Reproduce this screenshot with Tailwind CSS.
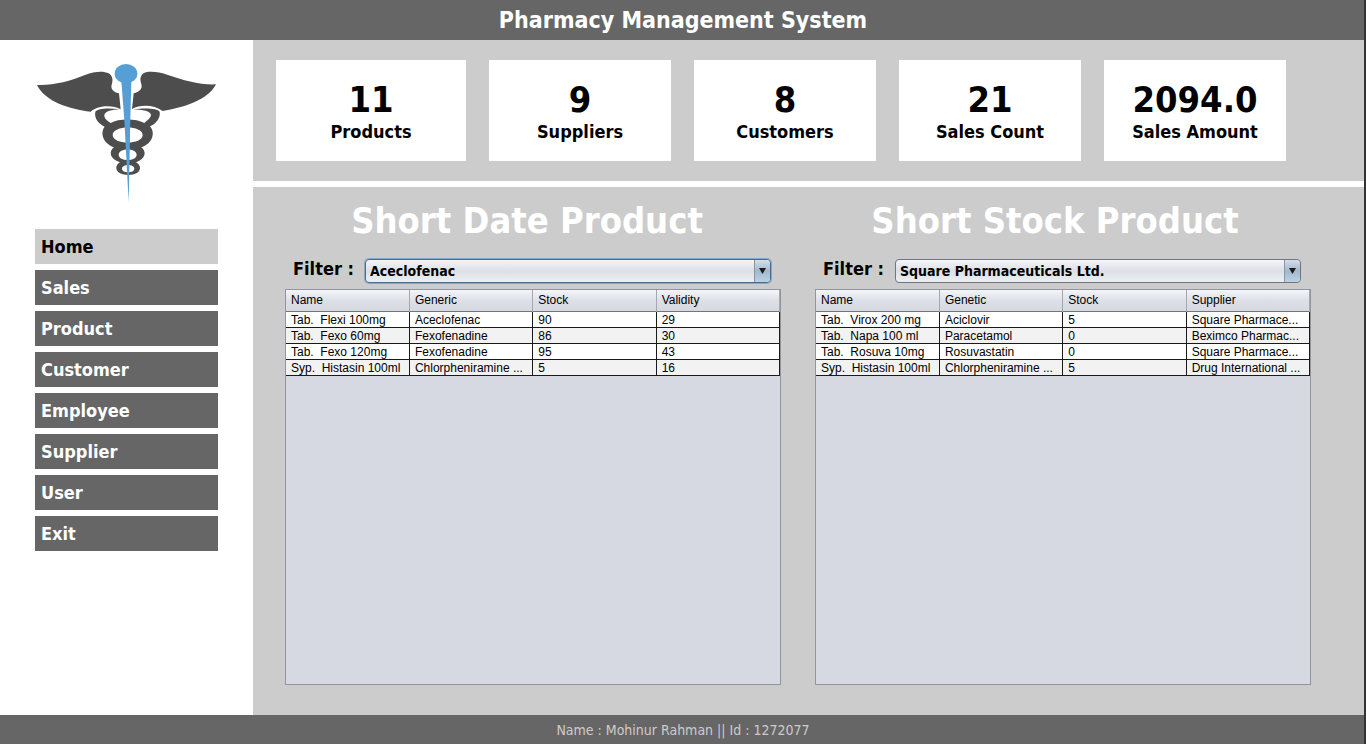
<!DOCTYPE html>
<html lang="en">
<head>
<meta charset="utf-8">
<meta name="viewport" content="width=device-width, initial-scale=1">
<title>Pharmacy Management System</title>
<script src="https://cdn.jsdelivr.net/npm/@tailwindcss/browser@4"></script>
</head>
<body class="flex min-h-screen flex-col border-r-2 border-[#333333] bg-white font-['DejaVu_Sans_Condensed','Noto_Sans',sans-serif] text-black">
  <header class="flex h-10 items-center justify-center bg-[#666666] pl-0.5">
    <h1 class="text-[23px] leading-7 font-bold text-white">Pharmacy Management System</h1>
  </header>

  <div class="flex grow">
    <aside class="flex w-[253px] shrink-0 flex-col px-[35px] pt-5">
      <svg class="h-[150px] w-full" viewBox="15 15 549 450" role="img" aria-label="Caduceus">
        <g fill="#4d4d4d">
          <path d="M21 90C70 92 120 78 165 60C195 48 222 48 236 55C248 62 250 76 245 89C241 102 252 112 267 115L272 163C250 150 205 150 182 170C120 163 45 140 21 90Z"/>
          <path d="M558 88C510 90 460 76 414 60C384 48 352 48 342 54C329 62 330 76 334 87C338 102 328 111 311 115L306 162C330 148 372 148 398 168C460 158 535 135 558 88Z"/>
          <path fill-rule="evenodd" d="M269 163C235 158 204 160 196 170C192 190 206 206 224 215C212 230 214 262 252 277C236 288 238 312 270 322C254 330 254 352 278 358Q295 362 312 358C335 352 335 331 318 322C348 312 350 289 334 277C370 265 376 232 360 214C378 206 392 190 389 170C382 160 348 158 310 163C338 164 362 168 363 180C362 190 349 198 343 204C318 190 266 190 242 204C232 198 222 190 223 180C226 168 246 164 269 163ZM248 240C248 210 338 210 338 240C338 270 248 270 248 240ZM266 299C266 278 320 278 320 299C320 320 266 320 266 299ZM276 341C276 326 313 326 313 341C313 355 276 355 276 341Z"/>
        </g>
        <g fill="#559fd6">
          <ellipse cx="288" cy="56" rx="34" ry="29"/>
          <path d="M274 78H304L301 195L296 442L283 195Z"/>
        </g>
      </svg>
      <nav class="mt-[19px] flex flex-col gap-1.5 text-[18px] leading-[35px] font-bold text-white" aria-label="Main">
        <a href="#home" aria-current="page" class="bg-[#cccccc] px-1.5 text-black">Home</a>
        <a href="#sales" class="bg-[#666666] px-1.5">Sales</a>
        <a href="#product" class="bg-[#666666] px-1.5">Product</a>
        <a href="#customer" class="bg-[#666666] px-1.5">Customer</a>
        <a href="#employee" class="bg-[#666666] px-1.5">Employee</a>
        <a href="#supplier" class="bg-[#666666] px-1.5">Supplier</a>
        <a href="#user" class="bg-[#666666] px-1.5">User</a>
        <a href="#exit" class="bg-[#666666] px-1.5">Exit</a>
      </nav>
    </aside>

    <main class="flex min-w-0 grow flex-col gap-1.5">
      <section class="grid grid-cols-[190fr_182fr_182fr_182fr_182fr] gap-[23px] bg-[#cccccc] py-5 pr-[78px] pl-[23px] text-center font-bold" aria-label="Totals">
        <div class="bg-white pt-5 pb-[17px]"><p class="text-[36px] leading-10">11</p><p class="text-[18px] leading-6">Products</p></div>
        <div class="bg-white pt-5 pb-[17px]"><p class="text-[36px] leading-10">9</p><p class="text-[18px] leading-6">Suppliers</p></div>
        <div class="bg-white pt-5 pb-[17px]"><p class="text-[36px] leading-10">8</p><p class="text-[18px] leading-6">Customers</p></div>
        <div class="bg-white pt-5 pb-[17px]"><p class="text-[36px] leading-10">21</p><p class="text-[18px] leading-6">Sales Count</p></div>
        <div class="bg-white pt-5 pb-[17px]"><p class="text-[36px] leading-10">2094.0</p><p class="text-[18px] leading-6">Sales Amount</p></div>
      </section>

      <div class="grid grow grid-cols-2 gap-[34px] bg-[#cccccc] pt-2.5 pr-[53px] pb-[30px] pl-8">
        <section class="flex min-w-0 flex-col">
          <h2 class="pr-3 text-center text-[36px] leading-[48px] font-bold text-white">Short Date Product</h2>
          <div class="mt-3.5 flex h-6 items-center pr-2.5 pl-2">
            <label for="generic" class="w-[72px] shrink-0 pb-1 text-[18px] leading-5 font-bold">Filter :</label>
            <div class="relative grow">
              <select id="generic" class="block h-6 w-full appearance-none rounded-sm border border-[#4f6b87] bg-linear-to-b from-[#f4f5f8] via-[#dcdfe5] to-[#eceff3] px-1 text-[14px] leading-5 font-bold ring-1 ring-[#86a9c9]">
                <option>Aceclofenac</option>
                <option>Fexofenadine</option>
              </select>
              <span class="pointer-events-none absolute inset-y-px right-px flex w-4 items-center justify-center rounded-r-sm border-l border-[#8796a6] bg-linear-to-b from-[#d3dfea] via-[#a3b8cc] to-[#bcd1e4]">
                <svg class="h-1.5 w-[7px]" viewBox="0 0 7 6" aria-hidden="true"><path d="M0 0H7L3.500 6Z" fill="#1b1b1b"/></svg>
              </span>
            </div>
          </div>
          <div class="mt-1.5 grow border border-[#92959d] bg-[#d6d9e1] font-['Liberation_Sans',Arial,sans-serif] text-[12px]">
            <table class="w-full table-fixed border-collapse text-left whitespace-pre">
              <thead class="bg-linear-to-b from-[#f4f5f8] via-[#dcdfe5] to-[#d6d9df] leading-[21px]">
                <tr class="border-b border-[#6f7480]">
                  <th class="border-r border-[#a4a7b0] pl-[5px] font-normal">Name</th>
                  <th class="border-r border-[#a4a7b0] pl-[5px] font-normal">Generic</th>
                  <th class="border-r border-[#a4a7b0] pl-[5px] font-normal">Stock</th>
                  <th class="border-r border-[#a4a7b0] pl-[5px] font-normal">Validity</th>
                </tr>
              </thead>
              <tbody class="leading-[13px] [&_td]:truncate [&_td]:border-r [&_td]:border-b [&_td]:border-[#1a1a1a] [&_td]:pt-0.5 [&_td]:pr-0.5 [&_td]:pl-[5px] [&_td]:whitespace-pre">
                <tr class="bg-white"><td>Tab.  Flexi 100mg</td><td>Aceclofenac</td><td>90</td><td>29</td></tr>
                <tr class="bg-[#f2f2f2]"><td>Tab.  Fexo 60mg</td><td>Fexofenadine</td><td>86</td><td>30</td></tr>
                <tr class="bg-white"><td>Tab.  Fexo 120mg</td><td>Fexofenadine</td><td>95</td><td>43</td></tr>
                <tr class="bg-[#f2f2f2]"><td>Syp.  Histasin 100ml</td><td>Chlorpheniramine ...</td><td>5</td><td>16</td></tr>
              </tbody>
            </table>
          </div>
        </section>

        <section class="flex min-w-0 flex-col">
          <h2 class="pr-4 text-center text-[36px] leading-[48px] font-bold text-white">Short Stock Product</h2>
          <div class="mt-3.5 flex h-6 items-center pr-2.5 pl-2">
            <label for="supplier-filter" class="w-[72px] shrink-0 pb-1 text-[18px] leading-5 font-bold">Filter :</label>
            <div class="relative grow">
              <select id="supplier-filter" class="block h-6 w-full appearance-none rounded-sm border border-[#70757f] bg-linear-to-b from-[#f4f5f8] via-[#dcdfe5] to-[#eceff3] px-1 text-[14px] leading-5 font-bold">
                <option>Square Pharmaceuticals Ltd.</option>
                <option>Beximco Pharmaceuticals Ltd.</option>
              </select>
              <span class="pointer-events-none absolute inset-y-px right-px flex w-4 items-center justify-center rounded-r-sm border-l border-[#8796a6] bg-linear-to-b from-[#d3dfea] via-[#a3b8cc] to-[#bcd1e4]">
                <svg class="h-1.5 w-[7px]" viewBox="0 0 7 6" aria-hidden="true"><path d="M0 0H7L3.500 6Z" fill="#1b1b1b"/></svg>
              </span>
            </div>
          </div>
          <div class="mt-1.5 grow border border-[#92959d] bg-[#d6d9e1] font-['Liberation_Sans',Arial,sans-serif] text-[12px]">
            <table class="w-full table-fixed border-collapse text-left whitespace-pre">
              <thead class="bg-linear-to-b from-[#f4f5f8] via-[#dcdfe5] to-[#d6d9df] leading-[21px]">
                <tr class="border-b border-[#6f7480]">
                  <th class="border-r border-[#a4a7b0] pl-[5px] font-normal">Name</th>
                  <th class="border-r border-[#a4a7b0] pl-[5px] font-normal">Genetic</th>
                  <th class="border-r border-[#a4a7b0] pl-[5px] font-normal">Stock</th>
                  <th class="border-r border-[#a4a7b0] pl-[5px] font-normal">Supplier</th>
                </tr>
              </thead>
              <tbody class="leading-[13px] [&_td]:truncate [&_td]:border-r [&_td]:border-b [&_td]:border-[#1a1a1a] [&_td]:pt-0.5 [&_td]:pr-0.5 [&_td]:pl-[5px] [&_td]:whitespace-pre">
                <tr class="bg-white"><td>Tab.  Virox 200 mg</td><td>Aciclovir</td><td>5</td><td>Square Pharmace...</td></tr>
                <tr class="bg-[#f2f2f2]"><td>Tab.  Napa 100 ml</td><td>Paracetamol</td><td>0</td><td>Beximco Pharmac...</td></tr>
                <tr class="bg-white"><td>Tab.  Rosuva 10mg</td><td>Rosuvastatin</td><td>0</td><td>Square Pharmace...</td></tr>
                <tr class="bg-[#f2f2f2]"><td>Syp.  Histasin 100ml</td><td>Chlorpheniramine ...</td><td>5</td><td>Drug International ...</td></tr>
              </tbody>
            </table>
          </div>
        </section>
      </div>
    </main>
  </div>

  <footer class="flex h-[29px] items-center justify-center bg-[#666666] pl-0.5 text-[14px] leading-5 text-[#cccccc]">Name : Mohinur Rahman || Id : 1272077</footer>
</body>
</html>
